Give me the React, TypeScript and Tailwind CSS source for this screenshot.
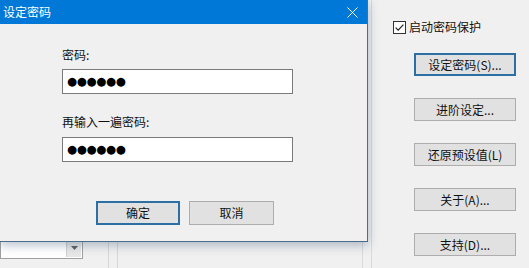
import React from 'react';

const font = { fontFamily: '"Noto Sans CJK SC", "Noto Sans", sans-serif' };

const rightButtons = [
  { label: '设定密码(S)...', primary: true },
  { label: '进阶设定...', primary: false },
  { label: '还原预设值(L)', primary: false },
  { label: '关于(A)...', primary: false },
  { label: '支持(D)...', primary: false },
];

function WinButton({ label, primary, className = '' }: { label: string; primary?: boolean; className?: string }) {
  return (
    <div
      className={
        'flex items-center justify-center bg-[#e1e1e1] text-[12px] text-[#111] leading-none ' +
        (primary ? 'border-2 border-[#2d6fa3] ' : 'border border-[#adadad] ') +
        className
      }
    >
      {label}
    </div>
  );
}

function PasswordBox() {
  return (
    <div className="h-[25px] w-[231px] border border-[#7a7a7a] bg-white flex items-center pl-[4px]">
      <span className="text-[11.5px] leading-none tracking-[-0.3px] text-black" style={{ fontFamily: '"DejaVu Sans", sans-serif' }}>
        ●●●●●●
      </span>
    </div>
  );
}

export default function App() {
  return (
    <div className="relative w-[529px] h-[268px] overflow-hidden bg-[#f0f0f0] flex" style={font}>
      {/* Main window content, mostly hidden by the dialog */}
      <div className="w-[372px] h-full flex">
        <div className="w-[108px] h-full flex flex-col justify-end pb-[9px]">
          <div className="h-[22px] w-[83px] bg-white border border-[#a0a0a0] flex justify-end items-stretch p-[1px]">
            <div className="w-[15px] bg-[#e8e8e8] border-l border-[#d0d0d0] flex items-center justify-center">
              <svg width="7" height="4" viewBox="0 0 7 4">
                <path d="M0 0 L7 0 L3.5 4 Z" fill="#606060" />
              </svg>
            </div>
          </div>
        </div>
        <div className="w-[10px] h-full border-l border-r border-[#d6d6d6]" />
        <div className="flex-1 h-full flex flex-col pt-[218px]">
          <div className="ml-[105px] w-[52px] h-[24px] border border-[#adadad] bg-[#e1e1e1]" />
        </div>
        <div className="w-[10px] h-full border-l border-r border-[#dadada]" />
      </div>

      {/* Right settings column */}
      <div className="flex-1 h-full flex flex-col pl-[21px] pt-[21px]">
        <div className="flex items-center gap-[3px] h-[12px]">
          <svg width="13" height="13" viewBox="0 0 13 13">
            <rect x="0.5" y="0.5" width="12" height="12" fill="#fff" stroke="#333" />
            <path d="M2.6 6.6 L5.2 9.2 L10.4 3.6" fill="none" stroke="#222" strokeWidth="1.2" />
          </svg>
          <span className="text-[12px] leading-none text-[#111]">启动密码保护</span>
        </div>
        <div className="flex flex-col gap-[22px] pl-[21px] pt-[20px]">
          {rightButtons.map((b) => (
            <WinButton key={b.label} label={b.label} primary={b.primary} className="w-[102px] h-[23px]" />
          ))}
        </div>
      </div>

      {/* Dialog window */}
      <div className="absolute left-0 top-0 w-[368px] h-[242px] bg-[#f0f0f0] border-r border-b border-[#4a6d8c] shadow-[0_3px_10px_rgba(40,70,110,0.35)] flex flex-col">
        <div className="h-[24px] bg-[#0078d7] flex items-center justify-between pl-[3px] pr-[9px]">
          <span className="text-[12px] leading-none text-white">设定密码</span>
          <svg width="11" height="11" viewBox="0 0 11 11">
            <path d="M0.5 0.5 L10.5 10.5 M10.5 0.5 L0.5 10.5" stroke="#fff" strokeWidth="1" />
          </svg>
        </div>
        <div className="flex flex-col pl-[62px] pt-[23px]">
          <div className="h-[16px] flex items-center text-[12px] text-[#111]">密码:</div>
          <div className="mt-[6px]">
            <PasswordBox />
          </div>
          <div className="mt-[20px] h-[16px] flex items-center text-[12px] text-[#111]">再输入一遍密码:</div>
          <div className="mt-[7px]">
            <PasswordBox />
          </div>
        </div>
        <div className="flex gap-[9px] pl-[96px] mt-[39px]">
          <WinButton label="确定" primary className="w-[84px] h-[24px]" />
          <WinButton label="取消" className="w-[85px] h-[24px]" />
        </div>
      </div>
    </div>
  );
}
